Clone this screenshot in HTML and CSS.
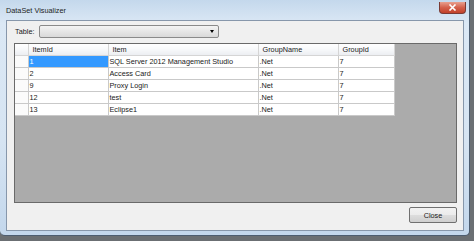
FILE: index.html
```html
<!DOCTYPE html>
<html lang="en">
<head>
  <meta charset="UTF-8">
  <title>DataSet Visualizer</title>
  <link rel="stylesheet" href="styles.css">
</head>
<body>
  <div class="window">
    <div class="titlebar">
      <span class="title">DataSet Visualizer</span>
      <button class="close-x">
        <svg width="9" height="7" viewBox="0 0 9 7"><path d="M1.5 0.5 L7.5 6.5 M7.5 0.5 L1.5 6.5" stroke="#fff" stroke-width="1.6"/></svg>
      </button>
    </div>
    <div class="client">
      <div class="table-row">
        <label class="table-label">Table:</label>
        <div class="combo">
          <span class="arrow"></span>
        </div>
      </div>
      <div class="grid">
        <table>
          <colgroup>
            <col class="c-rh"><col class="c-id"><col class="c-item"><col class="c-gname"><col class="c-gid">
          </colgroup>
          <thead>
            <tr><th></th><th>ItemId</th><th>Item</th><th>GroupName</th><th>GroupId</th></tr>
          </thead>
          <tbody>
            <tr><td class="rh"></td><td class="sel">1</td><td>SQL Server 2012 Management Studio</td><td>.Net</td><td>7</td></tr>
            <tr><td class="rh"></td><td>2</td><td>Access Card</td><td>.Net</td><td>7</td></tr>
            <tr><td class="rh"></td><td>9</td><td>Proxy Login</td><td>.Net</td><td>7</td></tr>
            <tr><td class="rh"></td><td>12</td><td>test</td><td>.Net</td><td>7</td></tr>
            <tr><td class="rh"></td><td>13</td><td>Eclipse1</td><td>.Net</td><td>7</td></tr>
          </tbody>
        </table>
      </div>
      <div class="footer">
        <button class="btn">Close</button>
      </div>
    </div>
  </div>
</body>
</html>
```

FILE: styles.css
```css
html, body {
  margin: 0;
  padding: 0;
  height: 100%;
  overflow: hidden;
  background: #6b6f73;
  font-family: "Liberation Sans", Arial, sans-serif;
  font-size: 7.3px;
  color: #1a1a1a;
}

.window {
  width: 469px;
  height: 235px;
  border: 1px solid #4d5d70;
  border-top: none;
  border-left: none;
  border-radius: 0 0 5px 5px;
  background: linear-gradient(to bottom, #c4d8ec 0%, #dbe8f5 10%, #d6e4f2 60%, #c3d7ec 100%);
  display: flex;
  flex-direction: column;
}

.titlebar {
  height: 20px;
  display: flex;
  align-items: flex-start;
  justify-content: space-between;
}

.title {
  margin: 6px 0 0 6px;
  font-size: 7.3px;
  color: #1e1e1e;
}

.close-x {
  margin: 2px 3px 0 0;
  width: 27px;
  height: 12px;
  padding: 0;
  border: 1px solid #7a3a34;
  border-top: none;
  border-radius: 0 0 4px 4px;
  background: linear-gradient(to bottom, #e8a08f 0%, #d4614c 50%, #c2412a 100%);
  display: flex;
  align-items: center;
  justify-content: center;
}

.client {
  flex: 1;
  margin: 0 5px 4px 6px;
  border: 1px solid #8797ab;
  background: #f0f0f0;
  display: flex;
  flex-direction: column;
  padding: 4px 6px 7px 7px;
}

.table-row {
  display: flex;
  align-items: center;
  height: 13px;
}

.table-label {
  width: 24px;
  padding-left: 1px;
}

.combo {
  width: 178px;
  height: 11px;
  border: 1px solid #8a8a8a;
  border-radius: 2px;
  background: linear-gradient(to bottom, #f4f4f4 0%, #e6e6e6 50%, #d9d9d9 100%);
  position: relative;
}

.arrow {
  position: absolute;
  right: 4px;
  top: 4px;
  border-left: 2px solid transparent;
  border-right: 2px solid transparent;
  border-top: 3px solid #000;
}

.grid {
  margin-top: 5px;
  height: 158px;
  border: 1px solid #6a6a6a;
  background: #ababab;
}

table {
  border-collapse: collapse;
  table-layout: fixed;
  width: 379px;
}

.c-rh { width: 13px; }
.c-id { width: 80px; }
.c-item { width: 150px; }
.c-gname { width: 80px; }
.c-gid { width: 56px; }

th {
  height: 11px;
  padding: 0 0 0 4px;
  text-align: left;
  font-weight: normal;
  background: linear-gradient(to bottom, #ffffff 0%, #f7f8fa 50%, #eceef2 100%);
  border-right: 1px solid #d5d5d5;
  border-bottom: 1px solid #d5d5d5;
  white-space: nowrap;
}

td {
  height: 11px;
  padding: 0 0 0 1px;
  background: #fff;
  border: 1px solid #c9c9c9;
  border-top: none;
  white-space: nowrap;
  overflow: hidden;
}

td.rh {
  background: #fbfbfb;
  border-left: none;
}

td.sel {
  background: #3399ff;
  color: #fff;
}

.footer {
  flex: 1;
  display: flex;
  justify-content: flex-end;
  align-items: flex-end;
}

.btn {
  width: 48px;
  height: 16px;
  padding: 0;
  font-family: inherit;
  font-size: 7.3px;
  color: #1a1a1a;
  border: 1px solid #707070;
  border-radius: 2px;
  background: linear-gradient(to bottom, #f2f2f2 0%, #ebebeb 50%, #dddddd 51%, #cfcfcf 100%);
}
```
